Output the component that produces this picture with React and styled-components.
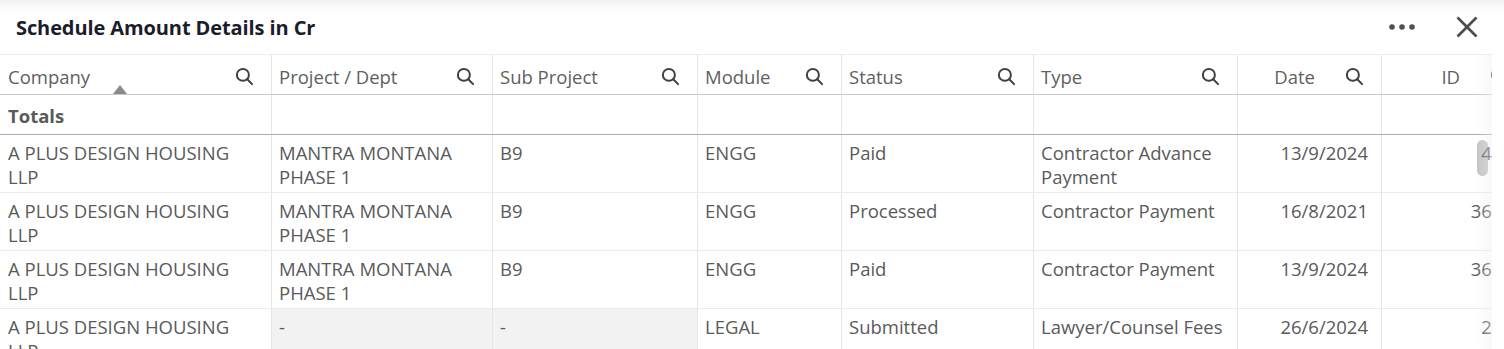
import React from 'react';
import styled, { createGlobalStyle } from 'styled-components';

const GlobalStyle = createGlobalStyle`
  html, body { margin: 0; padding: 0; background: #fff; }
  body { font-family: "Open Sans", "Noto Sans", sans-serif; }
`;

const COLS = '272px 221px 205px 144px 192px 204px 144px 145px 120px';

const Page = styled.div`
  width: 1504px;
  height: 349px;
  overflow: hidden;
  background: #fff;
`;

const TitleBar = styled.div`
  height: 54px;
  display: flex;
  align-items: center;
  padding: 0 26px 0 16px;
  box-sizing: border-box;
  background: linear-gradient(#f0f1f3 0px, #fbfbfc 8px, #ffffff 16px);
`;

const Title = styled.h1`
  margin: 0;
  font-size: 20px;
  font-weight: 700;
  color: #1c1c2b;
  letter-spacing: -0.1px;
`;

const Actions = styled.div`
  margin-left: auto;
  display: flex;
  align-items: center;
  gap: 40px;
`;

const IconButton = styled.button`
  border: 0;
  background: none;
  padding: 0;
  display: flex;
  align-items: center;
  justify-content: center;
  color: #4d4d4d;
  cursor: pointer;
`;

const TableWrap = styled.div`
  position: relative;
  width: 1492px;
  overflow: hidden;
  border-top: 1px solid #ececec;
  &::after {
    content: '';
    position: absolute;
    top: 0;
    right: 0;
    bottom: 0;
    width: 16px;
    background: linear-gradient(to right, rgba(255,255,255,0), rgba(240,240,240,0.45));
    pointer-events: none;
    z-index: 3;
  }
`;

const Row = styled.div`
  position: relative;
  display: grid;
  grid-template-columns: ${COLS};
  width: max-content;
  border-bottom: 1px solid ${p => p.$line || '#ebebeb'};
  min-height: ${p => p.$h}px;
  box-sizing: border-box;
`;

const Cell = styled.div`
  box-sizing: border-box;
  border-right: 1px solid #e6e6e6;
  padding: 6px ${p => (p.$right ? '13px' : '8px')} 0 7px;
  font-size: 18.5px;
  line-height: 24px;
  color: #5a5a5a;
  text-align: ${p => (p.$right ? 'right' : 'left')};
  background: ${p => (p.$muted ? '#f2f2f2' : 'transparent')};
  overflow: hidden;
  white-space: ${p => (p.$right ? 'nowrap' : 'normal')};
  &:first-child { padding-left: 8px; }
`;

const TotalCell = styled(Cell)`
  padding-top: 9px;
  font-weight: 700;
`;

const HeadCell = styled.div`
  position: relative;
  box-sizing: border-box;
  border-right: 1px solid #e6e6e6;
  padding: 3px 17px 0 7px;
  display: flex;
  align-items: center;
  justify-content: ${p => (p.$right ? 'flex-end' : 'space-between')};
  gap: ${p => (p.$right ? '30px' : '8px')};
  font-size: 18.5px;
  color: #5f5f5f;
  white-space: nowrap;
  &:first-child { padding-left: 8px; }
`;

const SortArrow = styled.span`
  position: absolute;
  left: 113px;
  bottom: 0;
  width: 0;
  height: 0;
  border-left: 7px solid transparent;
  border-right: 7px solid transparent;
  border-bottom: 9px solid #8a8a8a;
`;

const ScrollThumb = styled.div`
  position: absolute;
  left: 1477px;
  top: 85px;
  width: 11px;
  height: 36px;
  border-radius: 6px;
  background: #c4c4c4;
  z-index: 0;
`;

const SearchIcon = () => (
  <svg width="19" height="19" viewBox="0 0 20 20" fill="none" stroke="#3f3f3f" strokeWidth="2.1" strokeLinecap="round">
    <circle cx="8.3" cy="8.3" r="6.3" />
    <line x1="12.9" y1="12.9" x2="18" y2="18" />
  </svg>
);

const DotsIcon = () => (
  <svg width="28" height="8" viewBox="0 0 28 8" fill="#505050">
    <circle cx="4" cy="4" r="2.8" />
    <circle cx="14" cy="4" r="2.8" />
    <circle cx="24" cy="4" r="2.8" />
  </svg>
);

const CloseIcon = () => (
  <svg width="22" height="22" viewBox="0 0 22 22" fill="none" stroke="#4d4d4d" strokeWidth="2.6" strokeLinecap="butt">
    <line x1="1.5" y1="1.5" x2="20.5" y2="20.5" />
    <line x1="20.5" y1="1.5" x2="1.5" y2="20.5" />
  </svg>
);

const headers = [
  { label: 'Company', sort: true },
  { label: 'Project / Dept' },
  { label: 'Sub Project' },
  { label: 'Module' },
  { label: 'Status' },
  { label: 'Type' },
  { label: 'Date', right: true },
  { label: 'ID', right: true },
  { label: 'Amount', right: true },
];

const rows = [
  ['A PLUS DESIGN HOUSING LLP', 'MANTRA MONTANA PHASE 1', 'B9', 'ENGG', 'Paid', 'Contractor Advance Payment', '13/9/2024', '412', '1.25'],
  ['A PLUS DESIGN HOUSING LLP', 'MANTRA MONTANA PHASE 1', 'B9', 'ENGG', 'Processed', 'Contractor Payment', '16/8/2021', '3612', '0.48'],
  ['A PLUS DESIGN HOUSING LLP', 'MANTRA MONTANA PHASE 1', 'B9', 'ENGG', 'Paid', 'Contractor Payment', '13/9/2024', '3658', '0.72'],
  ['A PLUS DESIGN HOUSING LLP', '-', '-', 'LEGAL', 'Submitted', 'Lawyer/Counsel Fees', '26/6/2024', '215', '0.05'],
];

export default function App() {
  return (
    <Page>
      <GlobalStyle />
      <TitleBar>
        <Title>Schedule Amount Details in Cr</Title>
        <Actions>
          <IconButton aria-label="More options"><DotsIcon /></IconButton>
          <IconButton aria-label="Close"><CloseIcon /></IconButton>
        </Actions>
      </TitleBar>
      <TableWrap>
        <ScrollThumb />
        <Row $h={40} $line="#c9c9c9">
          {headers.map(h => (
            <HeadCell key={h.label} $right={h.right}>
              <span>{h.label}</span>
              <SearchIcon />
              {h.sort && <SortArrow />}
            </HeadCell>
          ))}
        </Row>
        <Row $h={40} $line="#ababab">
          <TotalCell>Totals</TotalCell>
          {headers.slice(1).map(h => <TotalCell key={h.label} />)}
        </Row>
        {rows.map((r, i) => (
          <Row key={i} $h={58}>
            {r.map((v, j) => (
              <Cell key={j} $right={j >= 6} $muted={v === '-'}>{v}</Cell>
            ))}
          </Row>
        ))}
      </TableWrap>
    </Page>
  );
}
